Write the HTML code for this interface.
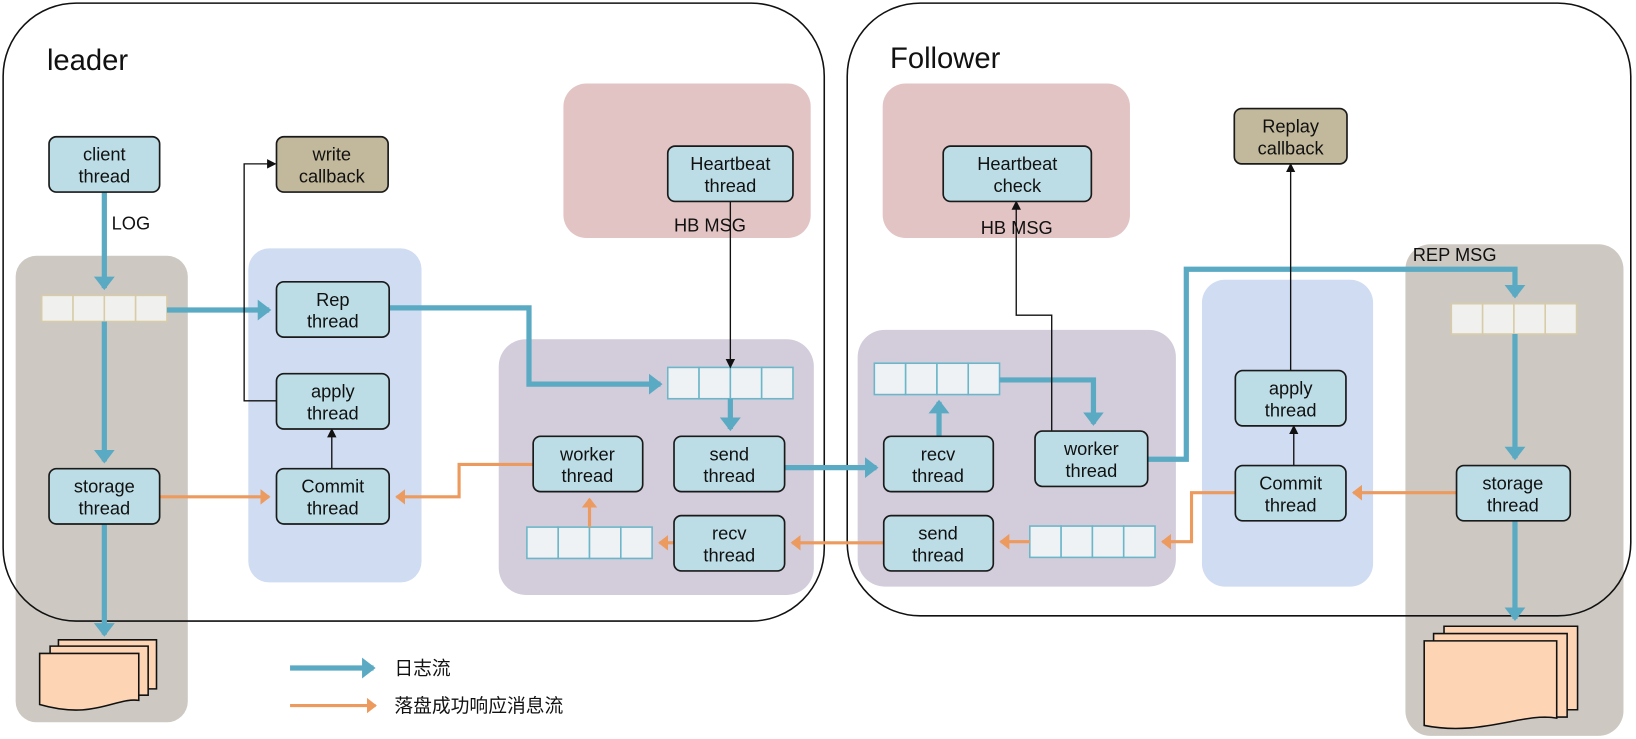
<!DOCTYPE html>
<html><head><meta charset="utf-8"><style>
html,body{margin:0;padding:0;background:#fff;}
svg{display:block}
text{font-family:"Liberation Sans","Noto Sans CJK SC",sans-serif;fill:#111}
.b{fill:#bcdde6;stroke:#1a1a1a;stroke-width:1.6}
.t{font-size:17.5px;text-anchor:middle}
.bl{fill:none;stroke:#5aaac3;stroke-width:5}
.or{fill:none;stroke:#ec9a5e;stroke-width:3}
.k{fill:none;stroke:#111;stroke-width:1.3}
</style></head><body>
<svg width="1636" height="739" viewBox="0 0 1568 708" preserveAspectRatio="none" xmlns="http://www.w3.org/2000/svg">
<defs>
<marker id="ab" markerWidth="4" markerHeight="4" refX="2.2" refY="2" orient="auto" markerUnits="strokeWidth"><path d="M0,0 L2.6,2 L0,4 Z" fill="#5aaac3"/></marker>
<marker id="ao" markerWidth="5" markerHeight="5" refX="2.8" refY="2.5" orient="auto" markerUnits="strokeWidth"><path d="M0,0 L3.2,2.5 L0,5 Z" fill="#ec9a5e"/></marker>
<marker id="ak" markerWidth="9" markerHeight="9" refX="8" refY="4.5" orient="auto" markerUnits="userSpaceOnUse"><path d="M0,0 L9,4.5 L0,9 Z" fill="#111"/></marker>
</defs>
<rect x="15" y="245" width="165" height="447" rx="20" fill="#cdc9c2"/>
<rect x="238" y="238" width="166" height="320" rx="20" fill="#cfdcf2"/>
<rect x="540" y="80" width="237" height="148" rx="22" fill="#e3c4c4"/>
<rect x="478" y="325" width="302" height="245" rx="26" fill="#d3ccdb"/>
<rect x="846" y="80" width="237" height="148" rx="22" fill="#e3c4c4"/>
<rect x="822" y="316" width="305" height="246" rx="26" fill="#d3ccdb"/>
<rect x="1152" y="268" width="164" height="294" rx="22" fill="#cfdcf2"/>
<rect x="1347" y="234" width="209" height="471" rx="24" fill="#cdc9c2"/>
<rect x="3" y="3" width="787" height="592" rx="70" fill="none" stroke="#111" stroke-width="1.5"/>
<rect x="812" y="3" width="751" height="587" rx="70" fill="none" stroke="#111" stroke-width="1.5"/>
<text x="45" y="67" font-size="28">leader</text>
<text x="853" y="65" font-size="28">Follower</text>
<g fill="#f0f0ee" stroke="#d8cca8" stroke-width="1.5">
<rect x="40" y="283" width="30" height="25"/><rect x="70" y="283" width="30" height="25"/><rect x="100" y="283" width="30" height="25"/><rect x="130" y="283" width="30" height="25"/>
<rect x="1391" y="291" width="30" height="29"/><rect x="1421" y="291" width="30" height="29"/><rect x="1451" y="291" width="30" height="29"/><rect x="1481" y="291" width="30" height="29"/>
</g>
<g fill="#eef2f5" stroke="#6bb6c8" stroke-width="1.5">
<rect x="640" y="352" width="30" height="30"/><rect x="670" y="352" width="30" height="30"/><rect x="700" y="352" width="30" height="30"/><rect x="730" y="352" width="30" height="30"/>
<rect x="505" y="505" width="30" height="30"/><rect x="535" y="505" width="30" height="30"/><rect x="565" y="505" width="30" height="30"/><rect x="595" y="505" width="30" height="30"/>
<rect x="838" y="348" width="30" height="30"/><rect x="868" y="348" width="30" height="30"/><rect x="898" y="348" width="30" height="30"/><rect x="928" y="348" width="30" height="30"/>
<rect x="987" y="504" width="30" height="30"/><rect x="1017" y="504" width="30" height="30"/><rect x="1047" y="504" width="30" height="30"/><rect x="1077" y="504" width="30" height="30"/>
</g>
<g fill="#fdd4b4" stroke="#111" stroke-width="1.5">
<path d="M56,613 H150 V660 H56Z"/><path d="M48,619 H142 V666 H48Z"/>
<path d="M38,626 H133 V671 C110,668 90,690 38,675 Z"/>
<path d="M1384,600 H1512 V680 H1384Z"/><path d="M1374,607 H1502 V687 H1374Z"/>
<path d="M1365,614 H1492 V688 C1460,682 1420,706 1365,695 Z"/>
</g>
<path class="bl" marker-end="url(#ab)" d="M100,184 V276"/>
<path class="bl" marker-end="url(#ab)" d="M100,308 V442"/>
<path class="bl" marker-end="url(#ab)" d="M100,502 V608"/>
<path class="bl" marker-end="url(#ab)" d="M160,297 H258"/>
<path class="bl" marker-end="url(#ab)" d="M373,295 H507 V368 H633"/>
<path class="bl" marker-end="url(#ab)" d="M700,382 V411"/>
<path class="bl" marker-end="url(#ab)" d="M752,448 H840"/>
<path class="bl" marker-end="url(#ab)" d="M900,418 V385"/>
<path class="bl" marker-end="url(#ab)" d="M958,364 H1048 V406"/>
<path class="bl" marker-end="url(#ab)" d="M1100,440 H1137 V258 H1452 V284"/>
<path class="bl" marker-end="url(#ab)" d="M1452,320 V439"/>
<path class="bl" marker-end="url(#ab)" d="M1452,499 V593"/>
<path class="bl" marker-end="url(#ab)" d="M278,640 H358"/>
<path class="or" marker-end="url(#ao)" d="M153,476 H258"/>
<path class="or" marker-end="url(#ao)" d="M511,445 H440 V476 H380"/>
<path class="or" marker-end="url(#ao)" d="M565,505 V478"/>
<path class="or" marker-end="url(#ao)" d="M646,520 H632"/>
<path class="or" marker-end="url(#ao)" d="M847,520 H759"/>
<path class="or" marker-end="url(#ao)" d="M987,519 H959"/>
<path class="or" marker-end="url(#ao)" d="M1184,472 H1142 V519 H1114"/>
<path class="or" marker-end="url(#ao)" d="M1396,472 H1297"/>
<path class="or" marker-end="url(#ao)" d="M278,676 H360"/>
<path class="k" marker-end="url(#ak)" d="M265,384 H234 V157 H264"/>
<path class="k" marker-end="url(#ak)" d="M318,449 V411"/>
<path class="k" marker-end="url(#ak)" d="M700,193 V352"/>
<path class="k" marker-end="url(#ak)" d="M1008,413 V302 H974 V193"/>
<path class="k" marker-end="url(#ak)" d="M1237,355 V157"/>
<path class="k" marker-end="url(#ak)" d="M1240,446 V408"/>
<rect class="b" x="47" y="131" width="106" height="53" rx="7"/><text class="t" x="100" y="154">client</text><text class="t" x="100" y="175">thread</text>
<rect class="b" x="265" y="131" width="107" height="53" rx="7" style="fill:#c2b99c"/><text class="t" x="318" y="154">write</text><text class="t" x="318" y="175">callback</text>
<rect class="b" x="265" y="270" width="108" height="53" rx="7"/><text class="t" x="319" y="293">Rep</text><text class="t" x="319" y="314">thread</text>
<rect class="b" x="265" y="358" width="108" height="53" rx="7"/><text class="t" x="319" y="381">apply</text><text class="t" x="319" y="402">thread</text>
<rect class="b" x="47" y="449" width="106" height="53" rx="7"/><text class="t" x="100" y="472">storage</text><text class="t" x="100" y="493">thread</text>
<rect class="b" x="265" y="449" width="108" height="53" rx="7"/><text class="t" x="319" y="472">Commit</text><text class="t" x="319" y="493">thread</text>
<rect class="b" x="640" y="140" width="120" height="53" rx="7"/><text class="t" x="700" y="163">Heartbeat</text><text class="t" x="700" y="184">thread</text>
<rect class="b" x="511" y="418" width="105" height="53" rx="7"/><text class="t" x="563" y="441">worker</text><text class="t" x="563" y="462">thread</text>
<rect class="b" x="646" y="418" width="106" height="53" rx="7"/><text class="t" x="699" y="441">send</text><text class="t" x="699" y="462">thread</text>
<rect class="b" x="646" y="494" width="106" height="53" rx="7"/><text class="t" x="699" y="517">recv</text><text class="t" x="699" y="538">thread</text>
<rect class="b" x="904" y="140" width="142" height="53" rx="7"/><text class="t" x="975" y="163">Heartbeat</text><text class="t" x="975" y="184">check</text>
<rect class="b" x="1183" y="104" width="108" height="53" rx="7" style="fill:#c2b99c"/><text class="t" x="1237" y="127">Replay</text><text class="t" x="1237" y="148">callback</text>
<rect class="b" x="992" y="413" width="108" height="53" rx="7"/><text class="t" x="1046" y="436">worker</text><text class="t" x="1046" y="457">thread</text>
<rect class="b" x="847" y="418" width="105" height="53" rx="7"/><text class="t" x="899" y="441">recv</text><text class="t" x="899" y="462">thread</text>
<rect class="b" x="847" y="494" width="105" height="53" rx="7"/><text class="t" x="899" y="517">send</text><text class="t" x="899" y="538">thread</text>
<rect class="b" x="1184" y="355" width="106" height="53" rx="7"/><text class="t" x="1237" y="378">apply</text><text class="t" x="1237" y="399">thread</text>
<rect class="b" x="1184" y="446" width="106" height="53" rx="7"/><text class="t" x="1237" y="469">Commit</text><text class="t" x="1237" y="490">thread</text>
<rect class="b" x="1396" y="446" width="109" height="53" rx="7"/><text class="t" x="1450" y="469">storage</text><text class="t" x="1450" y="490">thread</text>
<text x="107" y="220" font-size="17.5">LOG</text>
<text x="646" y="222" font-size="17.5">HB MSG</text>
<text x="940" y="224" font-size="17.5">HB MSG</text>
<text x="1354" y="250" font-size="17.5">REP MSG</text>
<text x="378" y="646" font-size="18">日志流</text>
<text x="378" y="682" font-size="18">落盘成功响应消息流</text>
</svg>
</body></html>
